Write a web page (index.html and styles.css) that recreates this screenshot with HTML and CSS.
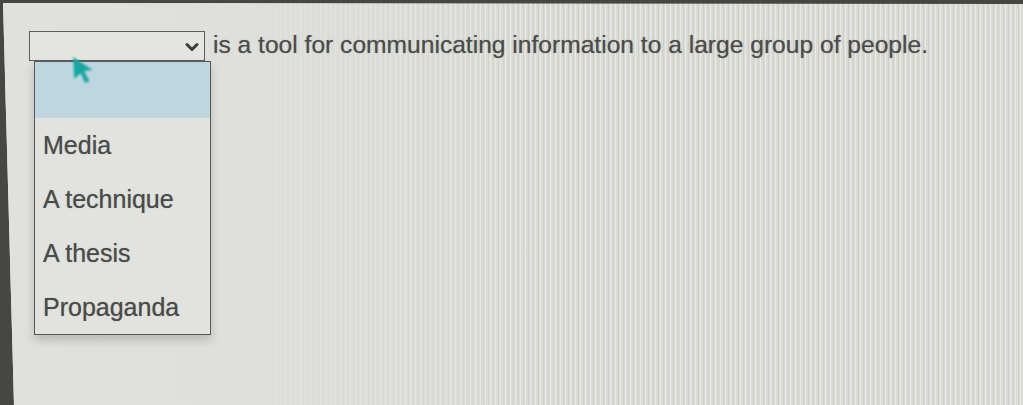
FILE: index.html
```html
<!DOCTYPE html>
<html lang="en">
  <head>
    <meta charset="UTF-8" />
    <meta name="viewport" content="width=device-width, initial-scale=1.0" />
    <title>Fill in the blank</title>
    <link rel="stylesheet" href="styles.css">
  </head>
  <body>
    <div class="screen">
      <div class="question">
        <div class="picker">
          <div class="select">
            <svg class="chevron" width="14" height="10" viewBox="0 0 14 10">
              <path d="M2 2.5 L7 7.5 L12 2.5" fill="none" stroke="#3c3c3c" stroke-width="3" stroke-linecap="round" stroke-linejoin="round" />
            </svg>
          </div>
          <!-- open dropdown list -->
          <ul class="options">
            <li class="option blank"></li>
            <li class="option">Media</li>
            <li class="option">A technique</li>
            <li class="option">A thesis</li>
            <li class="option">Propaganda</li>
          </ul>
        </div>
        <span class="stem">is a tool for communicating information to a large group of people.</span>
      </div>

      <svg class="cursor" width="26" height="32" viewBox="0 0 24 28">
        <path d="M2 2 L20 14 L12 15 L17 24 L13 26 L9 17 L3 22 Z" fill="#17a6a0" />
      </svg>
    </div>
  </body>
</html>
```

FILE: styles.css
```css
html,
body {
  margin: 0;
  padding: 0;
}

body {
  background-color: #464645;
  width: 1023px;
  height: 405px;
  overflow: hidden;
  font-family: "Liberation Sans", Arial, sans-serif;
}

/* Screen surface, slightly tilted against the dark bezel */
.screen {
  position: relative;
  box-sizing: border-box;
  width: 1023px;
  height: 405px;
  padding: 31px 0 0 29px;
  clip-path: polygon(3px 3px, 100% 4px, 100% 100%, 14px 100%);
  background:
    linear-gradient(90deg, #e0e1dc 0%, #dfe0db 22%, rgba(222, 223, 218, 0) 55%),
    repeating-linear-gradient(90deg,
      rgba(255, 255, 255, 0.4) 0 1px,
      rgba(0, 0, 0, 0) 1px 3px,
      rgba(0, 0, 0, 0.05) 3px 4px,
      rgba(0, 0, 0, 0) 4px 5px),
    #dadbd5;
}

.question {
  display: flex;
  align-items: center;
  gap: 8px;
}

.picker {
  position: relative;
}

.select {
  box-sizing: border-box;
  width: 176px;
  height: 30px;
  border: 1.5px solid #5e5e5c;
  background-color: #e4e5e1;
  display: flex;
  align-items: center;
  justify-content: flex-end;
  padding-right: 5px;
}

.chevron {
  margin-top: 2px;
}

.stem {
  font-size: 24.6px;
  color: #4c4c4c;
  white-space: nowrap;
  margin-top: -2px;
  text-shadow: 0 0 1px rgba(60, 60, 60, 0.5);
}

/* Dropdown popup */
.options {
  position: absolute;
  top: 30px;
  left: 5px;
  width: 175px;
  margin: 0;
  padding: 0;
  list-style: none;
  border: 1.5px solid #585856;
  background-color: #e2e3df;
  box-shadow: 0 5px 9px rgba(0, 0, 0, 0.18);
  z-index: 2;
}

.option {
  height: 54px;
  line-height: 54px;
  padding-left: 8px;
  font-size: 25px;
  color: #4a4a4a;
  white-space: nowrap;
  text-shadow: 0 0 1px rgba(60, 60, 60, 0.5);
}

.option.blank {
  height: 56px;
  background-color: #bdd6e0;
}

.cursor {
  position: absolute;
  left: 71px;
  top: 54px;
  filter: blur(0.8px);
  z-index: 3;
}
```
